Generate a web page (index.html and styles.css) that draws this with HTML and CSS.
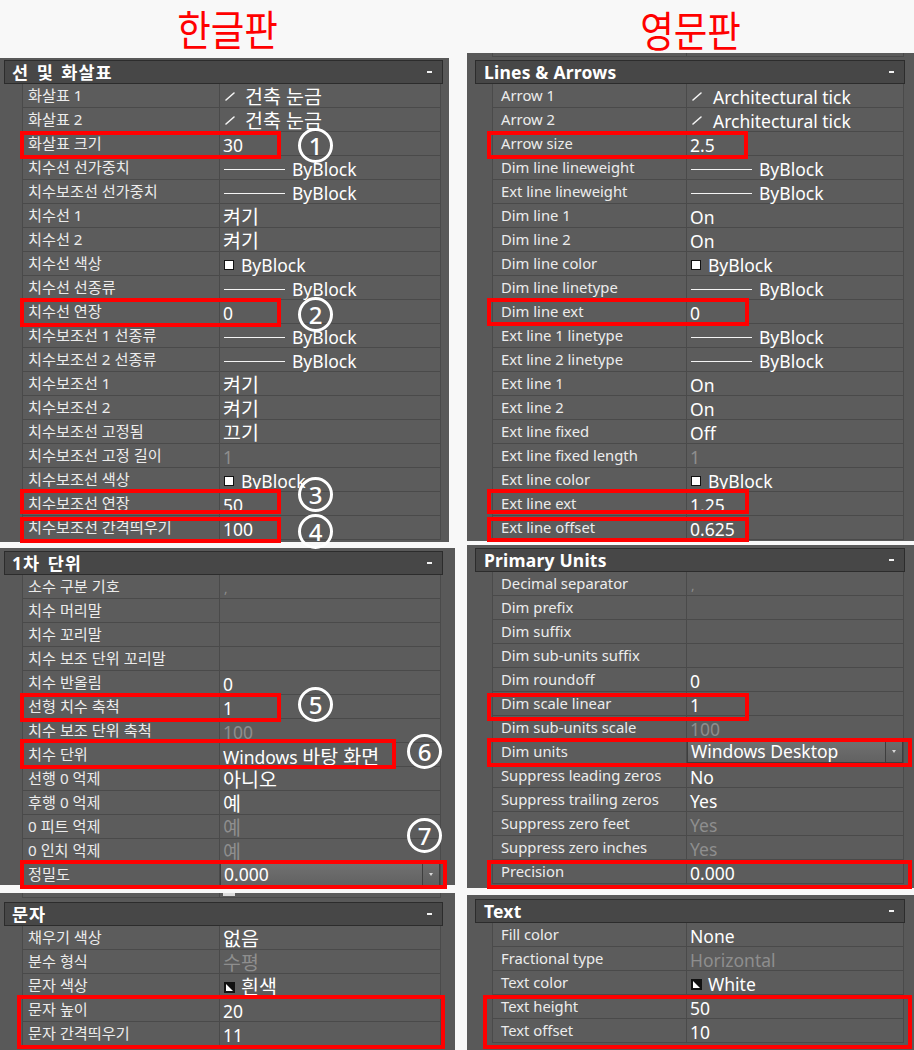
FILE: index.html
```html
<!DOCTYPE html>
<html lang="ko">
<head>
<meta charset="utf-8">
<title>한글판 / 영문판</title>
<link rel="stylesheet" href="styles.css">
</head>
<body>
<div class="page">
  <div class="col col-ko">
    <div class="title title-ko"><span>한글판</span></div>

    <section class="panel ko p1">
      <div class="hdr"><span class="hdr-t">선 및 화살표</span><span class="dash"></span></div>
      <div class="row"><span class="lbl">화살표 1</span><span class="val h"><svg class="tick" viewBox="0 0 12 12"><line x1="2" y1="10" x2="10" y2="3"/></svg>건축 눈금</span></div>
      <div class="row"><span class="lbl">화살표 2</span><span class="val h"><svg class="tick" viewBox="0 0 12 12"><line x1="2" y1="10" x2="10" y2="3"/></svg>건축 눈금</span></div>
      <div class="row"><span class="lbl">화살표 크기</span><span class="val">30</span></div>
      <div class="row"><span class="lbl">치수선 선가중치</span><span class="val"><i class="ln"></i>ByBlock</span></div>
      <div class="row"><span class="lbl">치수보조선 선가중치</span><span class="val"><i class="ln"></i>ByBlock</span></div>
      <div class="row"><span class="lbl">치수선 1</span><span class="val h">켜기</span></div>
      <div class="row"><span class="lbl">치수선 2</span><span class="val h">켜기</span></div>
      <div class="row"><span class="lbl">치수선 색상</span><span class="val"><i class="sq"></i>ByBlock</span></div>
      <div class="row"><span class="lbl">치수선 선종류</span><span class="val"><i class="ln"></i>ByBlock</span></div>
      <div class="row"><span class="lbl">치수선 연장</span><span class="val">0</span></div>
      <div class="row"><span class="lbl">치수보조선 1 선종류</span><span class="val"><i class="ln"></i>ByBlock</span></div>
      <div class="row"><span class="lbl">치수보조선 2 선종류</span><span class="val"><i class="ln"></i>ByBlock</span></div>
      <div class="row"><span class="lbl">치수보조선 1</span><span class="val h">켜기</span></div>
      <div class="row"><span class="lbl">치수보조선 2</span><span class="val h">켜기</span></div>
      <div class="row"><span class="lbl">치수보조선 고정됨</span><span class="val h">끄기</span></div>
      <div class="row"><span class="lbl">치수보조선 고정 길이</span><span class="val dis">1</span></div>
      <div class="row"><span class="lbl">치수보조선 색상</span><span class="val"><i class="sq"></i>ByBlock</span></div>
      <div class="row"><span class="lbl">치수보조선 연장</span><span class="val">50</span></div>
      <div class="row"><span class="lbl">치수보조선 간격띄우기</span><span class="val">100</span></div>
    </section>

    <section class="panel ko p2">
      <div class="hdr"><span class="hdr-t">1차 단위</span><span class="dash"></span></div>
      <div class="row"><span class="lbl">소수 구분 기호</span><span class="val dis comma">,</span></div>
      <div class="row"><span class="lbl">치수 머리말</span><span class="val"></span></div>
      <div class="row"><span class="lbl">치수 꼬리말</span><span class="val"></span></div>
      <div class="row"><span class="lbl">치수 보조 단위 꼬리말</span><span class="val"></span></div>
      <div class="row"><span class="lbl">치수 반올림</span><span class="val">0</span></div>
      <div class="row"><span class="lbl">선형 치수 축척</span><span class="val">1</span></div>
      <div class="row"><span class="lbl">치수 보조 단위 축척</span><span class="val dis">100</span></div>
      <div class="row"><span class="lbl">치수 단위</span><span class="val">Windows <span class="hs">바탕 화면</span></span></div>
      <div class="row"><span class="lbl">선행 0 억제</span><span class="val h">아니오</span></div>
      <div class="row"><span class="lbl">후행 0 억제</span><span class="val h">예</span></div>
      <div class="row"><span class="lbl">0 피트 억제</span><span class="val h dis">예</span></div>
      <div class="row"><span class="lbl">0 인치 억제</span><span class="val h dis">예</span></div>
      <div class="row"><span class="lbl">정밀도</span><span class="val drop"><span class="dd-field">0.000</span><span class="dd-btn"><i class="tri"></i></span></span></div>
    </section>

    <section class="panel ko p3">
      <div class="row frag"><span class="lbl"></span><span class="val"><i class="blob"></i></span></div>
      <div class="hdr"><span class="hdr-t">문자</span><span class="dash"></span></div>
      <div class="row"><span class="lbl">채우기 색상</span><span class="val h">없음</span></div>
      <div class="row"><span class="lbl">분수 형식</span><span class="val h dis">수평</span></div>
      <div class="row"><span class="lbl">문자 색상</span><span class="val h"><svg class="tc" viewBox="0 0 11 11"><rect x="0.5" y="0.5" width="10" height="10"/><polygon points="2,2 9,9 2,9"/></svg>흰색</span></div>
      <div class="row"><span class="lbl">문자 높이</span><span class="val">20</span></div>
      <div class="row"><span class="lbl">문자 간격띄우기</span><span class="val">11</span></div>
    </section>
  </div>

  <div class="col col-en">
    <div class="title title-en"><span>영문판</span></div>

    <section class="panel en q1">
      <div class="row frag"><span class="lbl"></span><span class="val"></span></div>
      <div class="hdr"><span class="hdr-t">Lines &amp; Arrows</span><span class="dash"></span></div>
      <div class="row"><span class="lbl">Arrow 1</span><span class="val"><svg class="tick" viewBox="0 0 12 12"><line x1="2" y1="10" x2="10" y2="3"/></svg>Architectural tick</span></div>
      <div class="row"><span class="lbl">Arrow 2</span><span class="val"><svg class="tick" viewBox="0 0 12 12"><line x1="2" y1="10" x2="10" y2="3"/></svg>Architectural tick</span></div>
      <div class="row"><span class="lbl">Arrow size</span><span class="val">2.5</span></div>
      <div class="row"><span class="lbl">Dim line lineweight</span><span class="val"><i class="ln"></i>ByBlock</span></div>
      <div class="row"><span class="lbl">Ext line lineweight</span><span class="val"><i class="ln"></i>ByBlock</span></div>
      <div class="row"><span class="lbl">Dim line 1</span><span class="val">On</span></div>
      <div class="row"><span class="lbl">Dim line 2</span><span class="val">On</span></div>
      <div class="row"><span class="lbl">Dim line color</span><span class="val"><i class="sq"></i>ByBlock</span></div>
      <div class="row"><span class="lbl">Dim line linetype</span><span class="val"><i class="ln"></i>ByBlock</span></div>
      <div class="row"><span class="lbl">Dim line ext</span><span class="val">0</span></div>
      <div class="row"><span class="lbl">Ext line 1 linetype</span><span class="val"><i class="ln"></i>ByBlock</span></div>
      <div class="row"><span class="lbl">Ext line 2 linetype</span><span class="val"><i class="ln"></i>ByBlock</span></div>
      <div class="row"><span class="lbl">Ext line 1</span><span class="val">On</span></div>
      <div class="row"><span class="lbl">Ext line 2</span><span class="val">On</span></div>
      <div class="row"><span class="lbl">Ext line fixed</span><span class="val">Off</span></div>
      <div class="row"><span class="lbl">Ext line fixed length</span><span class="val dis">1</span></div>
      <div class="row"><span class="lbl">Ext line color</span><span class="val"><i class="sq"></i>ByBlock</span></div>
      <div class="row"><span class="lbl">Ext line ext</span><span class="val">1.25</span></div>
      <div class="row"><span class="lbl">Ext line offset</span><span class="val">0.625</span></div>
    </section>

    <section class="panel en q2">
      <div class="hdr"><span class="hdr-t">Primary Units</span><span class="dash"></span></div>
      <div class="row"><span class="lbl">Decimal separator</span><span class="val dis comma">,</span></div>
      <div class="row"><span class="lbl">Dim prefix</span><span class="val"></span></div>
      <div class="row"><span class="lbl">Dim suffix</span><span class="val"></span></div>
      <div class="row"><span class="lbl">Dim sub-units suffix</span><span class="val"></span></div>
      <div class="row"><span class="lbl">Dim roundoff</span><span class="val">0</span></div>
      <div class="row"><span class="lbl">Dim scale linear</span><span class="val">1</span></div>
      <div class="row"><span class="lbl">Dim sub-units scale</span><span class="val dis">100</span></div>
      <div class="row"><span class="lbl">Dim units</span><span class="val drop"><span class="dd-field">Windows Desktop</span><span class="dd-btn"><i class="tri"></i></span></span></div>
      <div class="row"><span class="lbl">Suppress leading zeros</span><span class="val">No</span></div>
      <div class="row"><span class="lbl">Suppress trailing zeros</span><span class="val">Yes</span></div>
      <div class="row"><span class="lbl">Suppress zero feet</span><span class="val dis">Yes</span></div>
      <div class="row"><span class="lbl">Suppress zero inches</span><span class="val dis">Yes</span></div>
      <div class="row"><span class="lbl">Precision</span><span class="val">0.000</span></div>
    </section>

    <section class="panel en q3">
      <div class="hdr"><span class="hdr-t">Text</span><span class="dash"></span></div>
      <div class="row"><span class="lbl">Fill color</span><span class="val">None</span></div>
      <div class="row"><span class="lbl">Fractional type</span><span class="val dis">Horizontal</span></div>
      <div class="row"><span class="lbl">Text color</span><span class="val"><svg class="tc" viewBox="0 0 11 11"><rect x="0.5" y="0.5" width="10" height="10"/><polygon points="2,2 9,9 2,9"/></svg>White</span></div>
      <div class="row"><span class="lbl">Text height</span><span class="val">50</span></div>
      <div class="row"><span class="lbl">Text offset</span><span class="val">10</span></div>
    </section>
  </div>

  <div class="marks">
    <div class="box b-l1"></div>
    <div class="box b-l2"></div>
    <div class="box b-l3"></div>
    <div class="box b-l4"></div>
    <div class="box b-l5"></div>
    <div class="box b-l6"></div>
    <div class="box b-l7"></div>
    <div class="box b-l8"></div>
    <div class="box b-r1"></div>
    <div class="box b-r2"></div>
    <div class="box b-r3"></div>
    <div class="box b-r4"></div>
    <div class="box b-r5"></div>
    <div class="box b-r6"></div>
    <div class="box b-r7"></div>
    <div class="box b-r8"></div>
    <div class="num n1">1</div>
    <div class="num n2">2</div>
    <div class="num n3">3</div>
    <div class="num n4">4</div>
    <div class="num n5">5</div>
    <div class="num n6">6</div>
    <div class="num n7">7</div>
  </div>
</div>
</body>
</html>
```

FILE: styles.css
```css
* { box-sizing: border-box; }
html, body { margin: 0; padding: 0; }
body {
  background: #f8f8f8;
  width: 914px;
  height: 1050px;
  overflow: hidden;
  font-family: "Noto Sans", "Noto Sans CJK KR", sans-serif;
}
.page {
  position: relative;
  display: flex;
  gap: 12px;
  height: 1050px;
}
.col { display: flex; flex-direction: column; }
.col-ko { width: 455px; }
.col-en { width: 447px; }

.title {
  color: #ff0000;
  font-family: "Noto Sans CJK KR", sans-serif;
  font-size: 36.5px;
  text-align: center;
  display: flex;
  justify-content: center;
  align-items: center;
}
.title span {
  display: inline-block;
  line-height: 1.35;
  transform: scaleY(1.14);
}
.title-ko { height: 58px; padding-bottom: 1px; }
.title-en { height: 53px; padding-top: 6px; }

/* panels */
.panel {
  background: #595959;
  overflow: hidden;
  flex: none;
}
.panel.ko { --hx: 4px; --hw: 439px; --rx: 22px; --rw: 419px; --lw: 196px; }
.panel.en { --hx: 8px; --hw: 430px; --rx: 25px; --rw: 412px; --lw: 193px; }

.p1 { width: 449px; height: 484px; padding-top: 2px; }
.p2 { width: 455px; height: 337px; padding-top: 3px; margin-top: 6px; }
.p3 { width: 455px; height: 157px; margin-top: 8px; }
.q1 { width: 447px; height: 488px; }
.q2 { width: 447px; height: 343px; padding-top: 3px; margin-top: 4px; }
.q3 { width: 447px; height: 155px; padding-top: 4px; margin-top: 7px; }

.hdr {
  margin-left: var(--hx);
  width: var(--hw);
  height: 24px;
  background: #474747;
  border: 1px solid #2c2c2c;
  display: flex;
  align-items: center;
  justify-content: space-between;
  padding: 0 9px 0 7px;
  color: #ffffff;
}
.hdr-t {
  font-weight: 700;
  font-size: 17.5px;
  line-height: 22px;
  letter-spacing: 1px;
  word-spacing: 2px;
}
.en .hdr-t { letter-spacing: 0.2px; word-spacing: 0; padding-left: 1px; }
.dash {
  width: 5px;
  height: 2px;
  background: #f2f2f2;
  margin-right: 1px;
}

.row {
  display: flex;
  height: 24px;
  margin-left: var(--rx);
  width: var(--rw);
  background: #5c5c5c;
  border-left: 1px solid #4a4a4a;
  border-right: 1px solid #4a4a4a;
  border-bottom: 1px solid #4a4a4a;
}
.row.frag { height: 5px; }
.q1 .row.frag { height: 4px; margin-bottom: 3px; }
.p3 .row.frag { margin-bottom: 4px; }

.lbl {
  flex: none;
  width: var(--lw);
  padding-left: 5px;
  font-size: 15.2px;
  line-height: 22px;
  color: #ececec;
  white-space: nowrap;
  overflow: hidden;
}
.en .lbl { padding-left: 8px; font-size: 14.8px; }
.val {
  flex: 1;
  min-width: 0;
  border-left: 1px solid #4a4a4a;
  padding-left: 3px;
  padding-top: 2px;
  font-size: 17.5px;
  line-height: 23px;
  color: #ffffff;
  white-space: nowrap;
}
.val.h { font-size: 19.5px; padding-top: 1px; }
.hs { font-size: 19.5px; }
.val.dis { color: #8e8e8e; }
.val.comma { font-size: 13px; padding-left: 4px; }

/* icons */
.tick {
  width: 12px;
  height: 12px;
  margin: 0 9px 0 1px;
  vertical-align: 2px;
  stroke: #f4f4f4;
  stroke-width: 1.6;
  stroke-linecap: round;
}
.en .tick { margin-right: 10px; }
.ln {
  display: inline-block;
  width: 61px;
  height: 1px;
  background: #f4f4f4;
  vertical-align: 6px;
  margin: 0 7px 0 1px;
}
.sq {
  display: inline-block;
  width: 10px;
  height: 10px;
  background: #ffffff;
  border: 1px solid #111;
  margin: 0 7px 0 1px;
  vertical-align: 2px;
}
.tc {
  width: 11px;
  height: 11px;
  margin: 0 6px 0 1px;
  vertical-align: 1px;
}
.tc rect { fill: #111; stroke: #111; }
.tc polygon { fill: #ffffff; }
.blob {
  display: inline-block;
  width: 12px;
  height: 3px;
  background: #dcdcdc;
  vertical-align: top;
  margin-top: -2px;
}

/* dropdown */
.val.drop {
  display: flex;
  padding: 0;
}
.dd-field {
  flex: 1;
  background: linear-gradient(#707070, #626262);
  border: 1px solid #3e3e3e;
  padding-left: 3px;
  line-height: 21px;
}
.dd-btn {
  flex: none;
  width: 17px;
  background: linear-gradient(#6c6c6c, #5e5e5e);
  border: 1px solid #3e3e3e;
  border-left: none;
  display: flex;
  align-items: center;
  justify-content: center;
}
.tri {
  width: 0;
  height: 0;
  border-left: 2.5px solid transparent;
  border-right: 2.5px solid transparent;
  border-top: 3px solid #d8d8d8;
}

/* annotations */
.box {
  position: absolute;
  border: 4px solid #ff0000;
}
.b-l1 { left: 20px; top: 131px; width: 261px; height: 28px; }
.b-l2 { left: 20px; top: 298px; width: 261px; height: 29px; }
.b-l3 { left: 20px; top: 489px; width: 261px; height: 25px; }
.b-l4 { left: 20px; top: 517px; width: 261px; height: 26px; }
.b-l5 { left: 20px; top: 693px; width: 261px; height: 29px; }
.b-l6 { left: 20px; top: 739px; width: 376px; height: 30px; }
.b-l7 { left: 20px; top: 860px; width: 427px; height: 29px; }
.b-l8 { left: 17px; top: 995px; width: 428px; height: 54px; }
.b-r1 { left: 487px; top: 131px; width: 261px; height: 28px; }
.b-r2 { left: 487px; top: 298px; width: 262px; height: 28px; }
.b-r3 { left: 487px; top: 489px; width: 262px; height: 25px; }
.b-r4 { left: 487px; top: 517px; width: 262px; height: 25px; }
.b-r5 { left: 487px; top: 693px; width: 262px; height: 28px; }
.b-r6 { left: 487px; top: 738px; width: 425px; height: 29px; }
.b-r7 { left: 487px; top: 860px; width: 425px; height: 29px; }
.b-r8 { left: 483px; top: 995px; width: 429px; height: 54px; }

.num {
  position: absolute;
  width: 35px;
  height: 35px;
  border: 3px solid #ffffff;
  border-radius: 50%;
  color: #ffffff;
  font-family: "Noto Sans", sans-serif;
  font-weight: 500;
  font-size: 24px;
  line-height: 29px;
  text-align: center;
}
.n1 { left: 298px; top: 128px; }
.n2 { left: 298px; top: 297px; }
.n3 { left: 298px; top: 477px; }
.n4 { left: 298px; top: 514px; }
.n5 { left: 298px; top: 687px; }
.n6 { left: 407px; top: 734px; }
.n7 { left: 407px; top: 818px; }
```
